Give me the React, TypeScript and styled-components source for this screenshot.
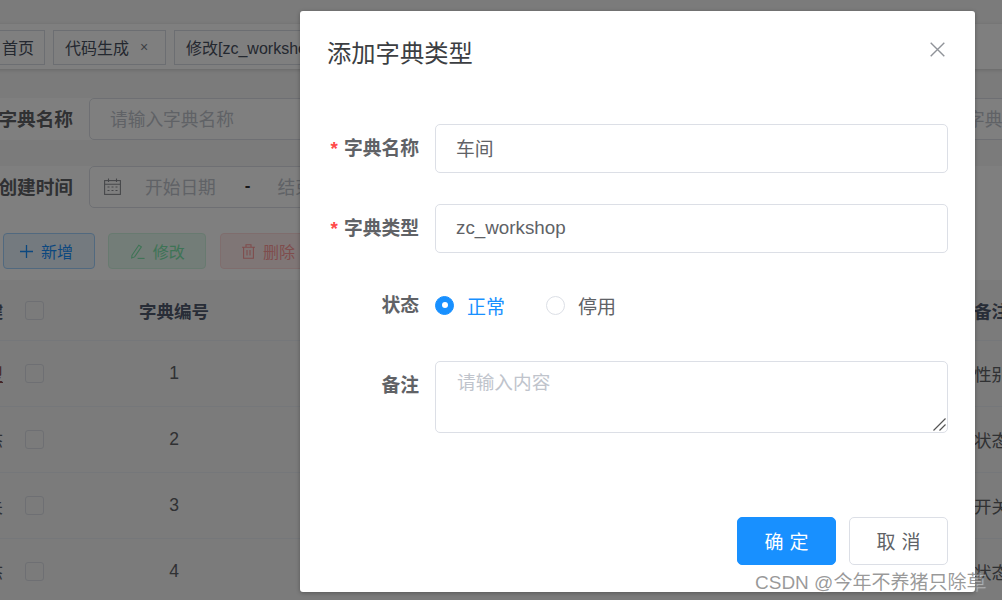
import { createGlobalStyle } from 'styled-components';
import styled from 'styled-components';

const GlobalStyle = createGlobalStyle`
  html, body {
    margin: 0;
    padding: 0;
    width: 100%;
    height: 100%;
    overflow: hidden;
    background: #fff;
  }
  * {
    box-sizing: border-box;
  }
  body, input, textarea, button {
    font-family: "Liberation Sans", "Noto Sans CJK SC", sans-serif;
  }
`;

const rows = [
  { id: 1, left: '型', right: '性别', link: true },
  { id: 2, left: '态', right: '状态', link: false },
  { id: 3, left: '关', right: '开关', link: false },
  { id: 4, left: '态', right: '状态', link: false },
];

function CalendarIcon() {
  return (
    <svg width='17' height='17' viewBox='0 0 17 17' fill='none' stroke='#8d8f94' strokeWidth='1.1'>
      <rect x='0.6' y='2.6' width='15.8' height='13.8' />
      <path d='M0.6 6.2h15.8M4.5 0.6v3.4M12.5 0.6v3.4M3.5 9h2M7.5 9h2M11.5 9h2M3.5 12.5h2M7.5 12.5h2M11.5 12.5h2' />
    </svg>
  );
}

function PlusIcon() {
  return (
    <svg width='13' height='13' viewBox='0 0 13 13' fill='none' stroke='#1890ff' strokeWidth='1.3'>
      <path d='M6.5 0v13M0 6.5h13' />
    </svg>
  );
}

function EditIcon() {
  return (
    <svg width='14' height='15' viewBox='0 0 14 15' fill='none' stroke='#7de8ac' strokeWidth='1.1'>
      <path d='M1 11.2 7.8 1.2l2.6 1.7-6.8 10-2.9 1z' />
      <path d='M6.6 14.4h7' />
    </svg>
  );
}

function TrashIcon() {
  return (
    <svg width='13' height='15' viewBox='0 0 13 15' fill='none' stroke='#ff9a9a' strokeWidth='1.1'>
      <path d='M0 3.2h13M4 3.2V0.8h5v2.4M1.6 3.2v11h9.8v-11M5 6v5.5M8 6v5.5' />
    </svg>
  );
}

function CloseIcon() {
  return (
    <svg width='15' height='15' viewBox='0 0 15 15' fill='none' stroke='#909399' strokeWidth='1.4'>
      <path d='M0.7 0.7l13.6 13.6M14.3 0.7 0.7 14.3' />
    </svg>
  );
}

function GripIcon() {
  return (
    <svg width='13' height='13' viewBox='0 0 13 13' fill='none' stroke='#555' strokeWidth='1.2'>
      <path d='M0.5 12.5 12.5 0.5M6.5 12.5l6-6' />
    </svg>
  );
}

export default function App() {
  return (
    <Viewport>
      <GlobalStyle />
      <Page>
        <TagsBar>
          <Tag $width={75} $lead={31}>首页</Tag>
          <Tag $width={113} $lead={11}>
            代码生成
            <TagClose>×</TagClose>
          </Tag>
          <Tag $width={260} $lead={11}>修改[zc_workshop]</Tag>
        </TagsBar>

        <SearchRow>
          <SearchLabel>字典名称</SearchLabel>
          <SearchInput $width={380}>
            <SearchPlaceholder>请输入字典名称</SearchPlaceholder>
          </SearchInput>
          <SearchInput $width={300} $offset={424}>
            <SearchPlaceholder>请输入字典类型</SearchPlaceholder>
          </SearchInput>
        </SearchRow>

        <SearchRow>
          <SearchLabel>创建时间</SearchLabel>
          <SearchInput $width={380} $gap={24}>
            <CalendarIcon />
            <SearchPlaceholder>开始日期</SearchPlaceholder>
            <DateDash>-</DateDash>
            <SearchPlaceholder>结束日期</SearchPlaceholder>
          </SearchInput>
        </SearchRow>

        <ActionRow>
          <ActionButton $tone='blue' $width={92} $shift={-5}>
            <PlusIcon />
            新增
          </ActionButton>
          <ActionButton $tone='green' $width={98} $shift={1}>
            <EditIcon />
            修改
          </ActionButton>
          <ActionButton $tone='red' $width={98}>
            <TrashIcon />
            删除
          </ActionButton>
        </ActionRow>

        <TableWrap>
          <HeaderRow>
            <CutCell>键</CutCell>
            <CheckCell>
              <Checkbox />
            </CheckCell>
            <NumberCell>字典编号</NumberCell>
            <span />
            <RemarkCell>备注</RemarkCell>
          </HeaderRow>
          {rows.map((row) => (
            <BodyRow key={row.id}>
              <CutCell $link={row.link}>{row.left}</CutCell>
              <CheckCell>
                <Checkbox />
              </CheckCell>
              <NumberCell>{row.id}</NumberCell>
              <span />
              <RemarkCell>{row.right}</RemarkCell>
            </BodyRow>
          ))}
        </TableWrap>
      </Page>

      <Overlay />

      <Modal>
        <ModalHeader>
          <ModalTitle>添加字典类型</ModalTitle>
          <CloseButton>
            <CloseIcon />
          </CloseButton>
        </ModalHeader>

        <FormRow>
          <FormLabel $required>字典名称</FormLabel>
          <TextInput value='车间' readOnly />
        </FormRow>
        <FormRow>
          <FormLabel $required>字典类型</FormLabel>
          <TextInput value='zc_workshop' readOnly />
        </FormRow>
        <RadioRow>
          <FormLabel>状态</FormLabel>
          <RadioItem>
            <RadioDot $checked />
            <RadioText $checked>正常</RadioText>
          </RadioItem>
          <RadioItem>
            <RadioDot />
            <RadioText>停用</RadioText>
          </RadioItem>
        </RadioRow>
        <FormRow>
          <FormLabel>备注</FormLabel>
          <TextAreaWrap>
            <TextArea placeholder='请输入内容' readOnly />
            <Grip>
              <GripIcon />
            </Grip>
          </TextAreaWrap>
        </FormRow>

        <ModalFooter>
          <FooterButton $primary>确定</FooterButton>
          <FooterButton>取消</FooterButton>
        </ModalFooter>
      </Modal>

      <Watermark>CSDN @今年不养猪只除草</Watermark>
    </Viewport>
  );
}

const Viewport = styled.div`
  position: relative;
  width: 1002px;
  height: 600px;
  overflow: hidden;
  background: #f6f6f6;
`;

const Page = styled.div`
  width: 1500px;
  margin-left: -40px;
  padding-top: 24px;
  color: #606266;
`;

const TagsBar = styled.div`
  display: flex;
  gap: 8px;
  height: 45px;
  padding: 6px 0 0 10px;
  background: #fff;
  box-shadow: 0 1px 4px rgba(0, 0, 0, 0.16);
`;

const Tag = styled.div<{ $width: number; $lead: number }>`
  display: flex;
  align-items: center;
  flex: none;
  width: ${(p) => p.$width}px;
  height: 35px;
  padding: 0 0 2px ${(p) => p.$lead}px;
  border: 1px solid #d8dce5;
  background: #fff;
  white-space: nowrap;
  font-size: 16px;
  color: #495060;
`;

const TagClose = styled.span`
  margin-left: 11px;
  font-size: 14px;
  color: #7b7f88;
`;

const SearchRow = styled.div`
  display: flex;
  align-items: center;
  height: 42px;
  background: #fff;
  margin-top: 29px;
  & + & {
    margin-top: 26px;
  }
`;

const SearchLabel = styled.div`
  flex: none;
  width: 113px;
  margin-right: 16px;
  padding-bottom: 3px;
  text-align: right;
  white-space: nowrap;
  font-size: 18.67px;
  font-weight: 700;
  color: #606266;
`;

const SearchInput = styled.div<{ $width: number; $offset?: number; $gap?: number }>`
  display: flex;
  align-items: center;
  gap: ${(p) => p.$gap ?? 0}px;
  flex: none;
  width: ${(p) => p.$width}px;
  height: 42px;
  margin-left: ${(p) => p.$offset ?? 0}px;
  padding: 0 0 2px ${(p) => (p.$gap ? 14 : 20)}px;
  border: 1px solid #dcdfe6;
  border-radius: 5px;
  background: #fff;
`;

const SearchPlaceholder = styled.span`
  flex: none;
  font-size: 17.7px;
  color: #c0c4cc;
`;

const DateDash = styled.span`
  flex: none;
  margin: 0 3px 0 5px;
  font-size: 17px;
  font-weight: 700;
  color: #303133;
`;

const toneStyles = {
  blue: { bg: '#e8f4ff', border: '#a3d3ff', text: '#1890ff' },
  green: { bg: '#e7faf0', border: '#d0f5e0', text: '#7de8ac' },
  red: { bg: '#ffeded', border: '#ffdbdb', text: '#ff9a9a' },
};

const ActionRow = styled.div`
  display: flex;
  gap: 13.25px;
  height: 72px;
  padding: 25px 0 11px 43px;
  background: #fff;
`;

const ActionButton = styled.div<{ $tone: keyof typeof toneStyles; $width: number; $shift?: number }>`
  display: flex;
  align-items: center;
  justify-content: center;
  gap: 8px;
  flex: none;
  width: ${(p) => p.$width}px;
  height: 36px;
  padding-left: ${(p) => Math.max(p.$shift ?? 0, 0)}px;
  padding-right: ${(p) => Math.max(-(p.$shift ?? 0), 0)}px;
  border: 1px solid ${(p) => toneStyles[p.$tone].border};
  border-radius: 4px;
  background: ${(p) => toneStyles[p.$tone].bg};
  font-size: 16px;
  color: ${(p) => toneStyles[p.$tone].text};
`;

const TableWrap = styled.div`
  background: #f6f6f6;
`;

const HeaderRow = styled.div`
  display: grid;
  grid-template-columns: 43px 63px 216px 692px 200px;
  align-items: center;
  height: 61px;
  border-bottom: 1px solid #ebeef5;
  font-size: 17.5px;
  font-weight: 700;
  color: #515a6e;
`;

const BodyRow = styled(HeaderRow)`
  height: 66px;
  font-weight: 400;
  color: #606266;
`;

const CutCell = styled.div<{ $link?: boolean }>`
  text-align: right;
  color: ${(p) => (p.$link ? '#8a4b4b' : 'inherit')};
  text-decoration: ${(p) => (p.$link ? 'underline' : 'none')};
`;

const CheckCell = styled.div`
  display: flex;
  padding-left: 22px;
`;

const NumberCell = styled.div`
  text-align: center;
`;

const RemarkCell = styled.div`
  white-space: nowrap;
`;

const Checkbox = styled.span`
  display: block;
  width: 19px;
  height: 19px;
  border: 1px solid #dcdfe6;
  border-radius: 3px;
  background: #f6f6f6;
`;

const Overlay = styled.div`
  position: absolute;
  inset: 0;
  background: rgba(0, 0, 0, 0.5);
`;

const Modal = styled.div`
  position: absolute;
  left: 300px;
  top: 11px;
  width: 675px;
  height: 581px;
  padding: 0 27px;
  border-radius: 3px;
  background: #fff;
  box-shadow: 0 1px 4px rgba(0, 0, 0, 0.3);
`;

const ModalHeader = styled.div`
  display: flex;
  align-items: flex-start;
  justify-content: space-between;
  height: 113px;
  padding-top: 26px;
`;

const ModalTitle = styled.div`
  font-size: 24.3px;
  line-height: 34px;
  color: #3c3e42;
`;

const CloseButton = styled.div`
  display: flex;
  margin: 5px 3px 0 0;
`;

const FormRow = styled.div`
  display: flex;
  margin-bottom: 31px;
`;

const RadioRow = styled(FormRow)`
  align-items: center;
  height: 42px;
  margin-bottom: 35px;
`;

const FormLabel = styled.label<{ $required?: boolean }>`
  flex: none;
  width: 92px;
  margin-right: 16px;
  line-height: 49px;
  text-align: right;
  white-space: nowrap;
  font-size: 18.8px;
  font-weight: 700;
  color: #606266;
  &::before {
    content: ${(p) => (p.$required ? '"*"' : 'none')};
    margin-right: 6px;
    font-weight: 700;
    color: #ff4949;
  }
`;

const TextInput = styled.input`
  flex: 1;
  min-width: 0;
  height: 49px;
  padding: 0 20px 2px;
  border: 1px solid #dcdfe6;
  border-radius: 5px;
  outline: none;
  font-size: 18.8px;
  color: #606266;
`;

const TextAreaWrap = styled.div`
  position: relative;
  display: flex;
  flex: 1;
  min-width: 0;
`;

const TextArea = styled.textarea`
  flex: 1;
  min-width: 0;
  height: 72px;
  padding: 7px 21px;
  border: 1px solid #dcdfe6;
  border-radius: 5px;
  outline: none;
  resize: none;
  font-size: 18.67px;
  line-height: 28px;
  color: #606266;
  &::placeholder {
    color: #c0c4cc;
  }
`;

const Grip = styled.span`
  position: absolute;
  right: 2px;
  bottom: 2px;
  display: flex;
`;

const RadioItem = styled.div`
  display: flex;
  align-items: center;
  gap: 13px;
  margin-right: 41px;
`;

const RadioDot = styled.span<{ $checked?: boolean }>`
  display: flex;
  align-items: center;
  justify-content: center;
  width: 19px;
  height: 19px;
  border: 1px solid ${(p) => (p.$checked ? '#1890ff' : '#dcdfe6')};
  border-radius: 50%;
  background: ${(p) => (p.$checked ? '#1890ff' : '#fff')};
  &::after {
    content: '';
    width: 6px;
    height: 6px;
    border-radius: 50%;
    background: #fff;
  }
`;

const RadioText = styled.span<{ $checked?: boolean }>`
  font-size: 19px;
  color: ${(p) => (p.$checked ? '#1890ff' : '#606266')};
`;

const ModalFooter = styled.div`
  display: flex;
  justify-content: flex-end;
  gap: 13px;
  margin-top: 84px;
`;

const FooterButton = styled.button<{ $primary?: boolean }>`
  width: 99px;
  height: 48px;
  padding: 0 0 2px;
  border: 1px solid ${(p) => (p.$primary ? '#1890ff' : '#dcdfe6')};
  border-radius: 5px;
  background: ${(p) => (p.$primary ? '#1890ff' : '#fff')};
  font-size: 19px;
  letter-spacing: 6px;
  text-indent: 6px;
  color: ${(p) => (p.$primary ? '#fff' : '#606266')};
`;

const Watermark = styled.div`
  position: absolute;
  left: 755px;
  top: 572px;
  font-size: 19px;
  line-height: 22px;
  white-space: nowrap;
  color: rgba(120, 120, 120, 0.75);
  text-shadow: 1px 1px 1px rgba(255, 255, 255, 0.5);
`;
